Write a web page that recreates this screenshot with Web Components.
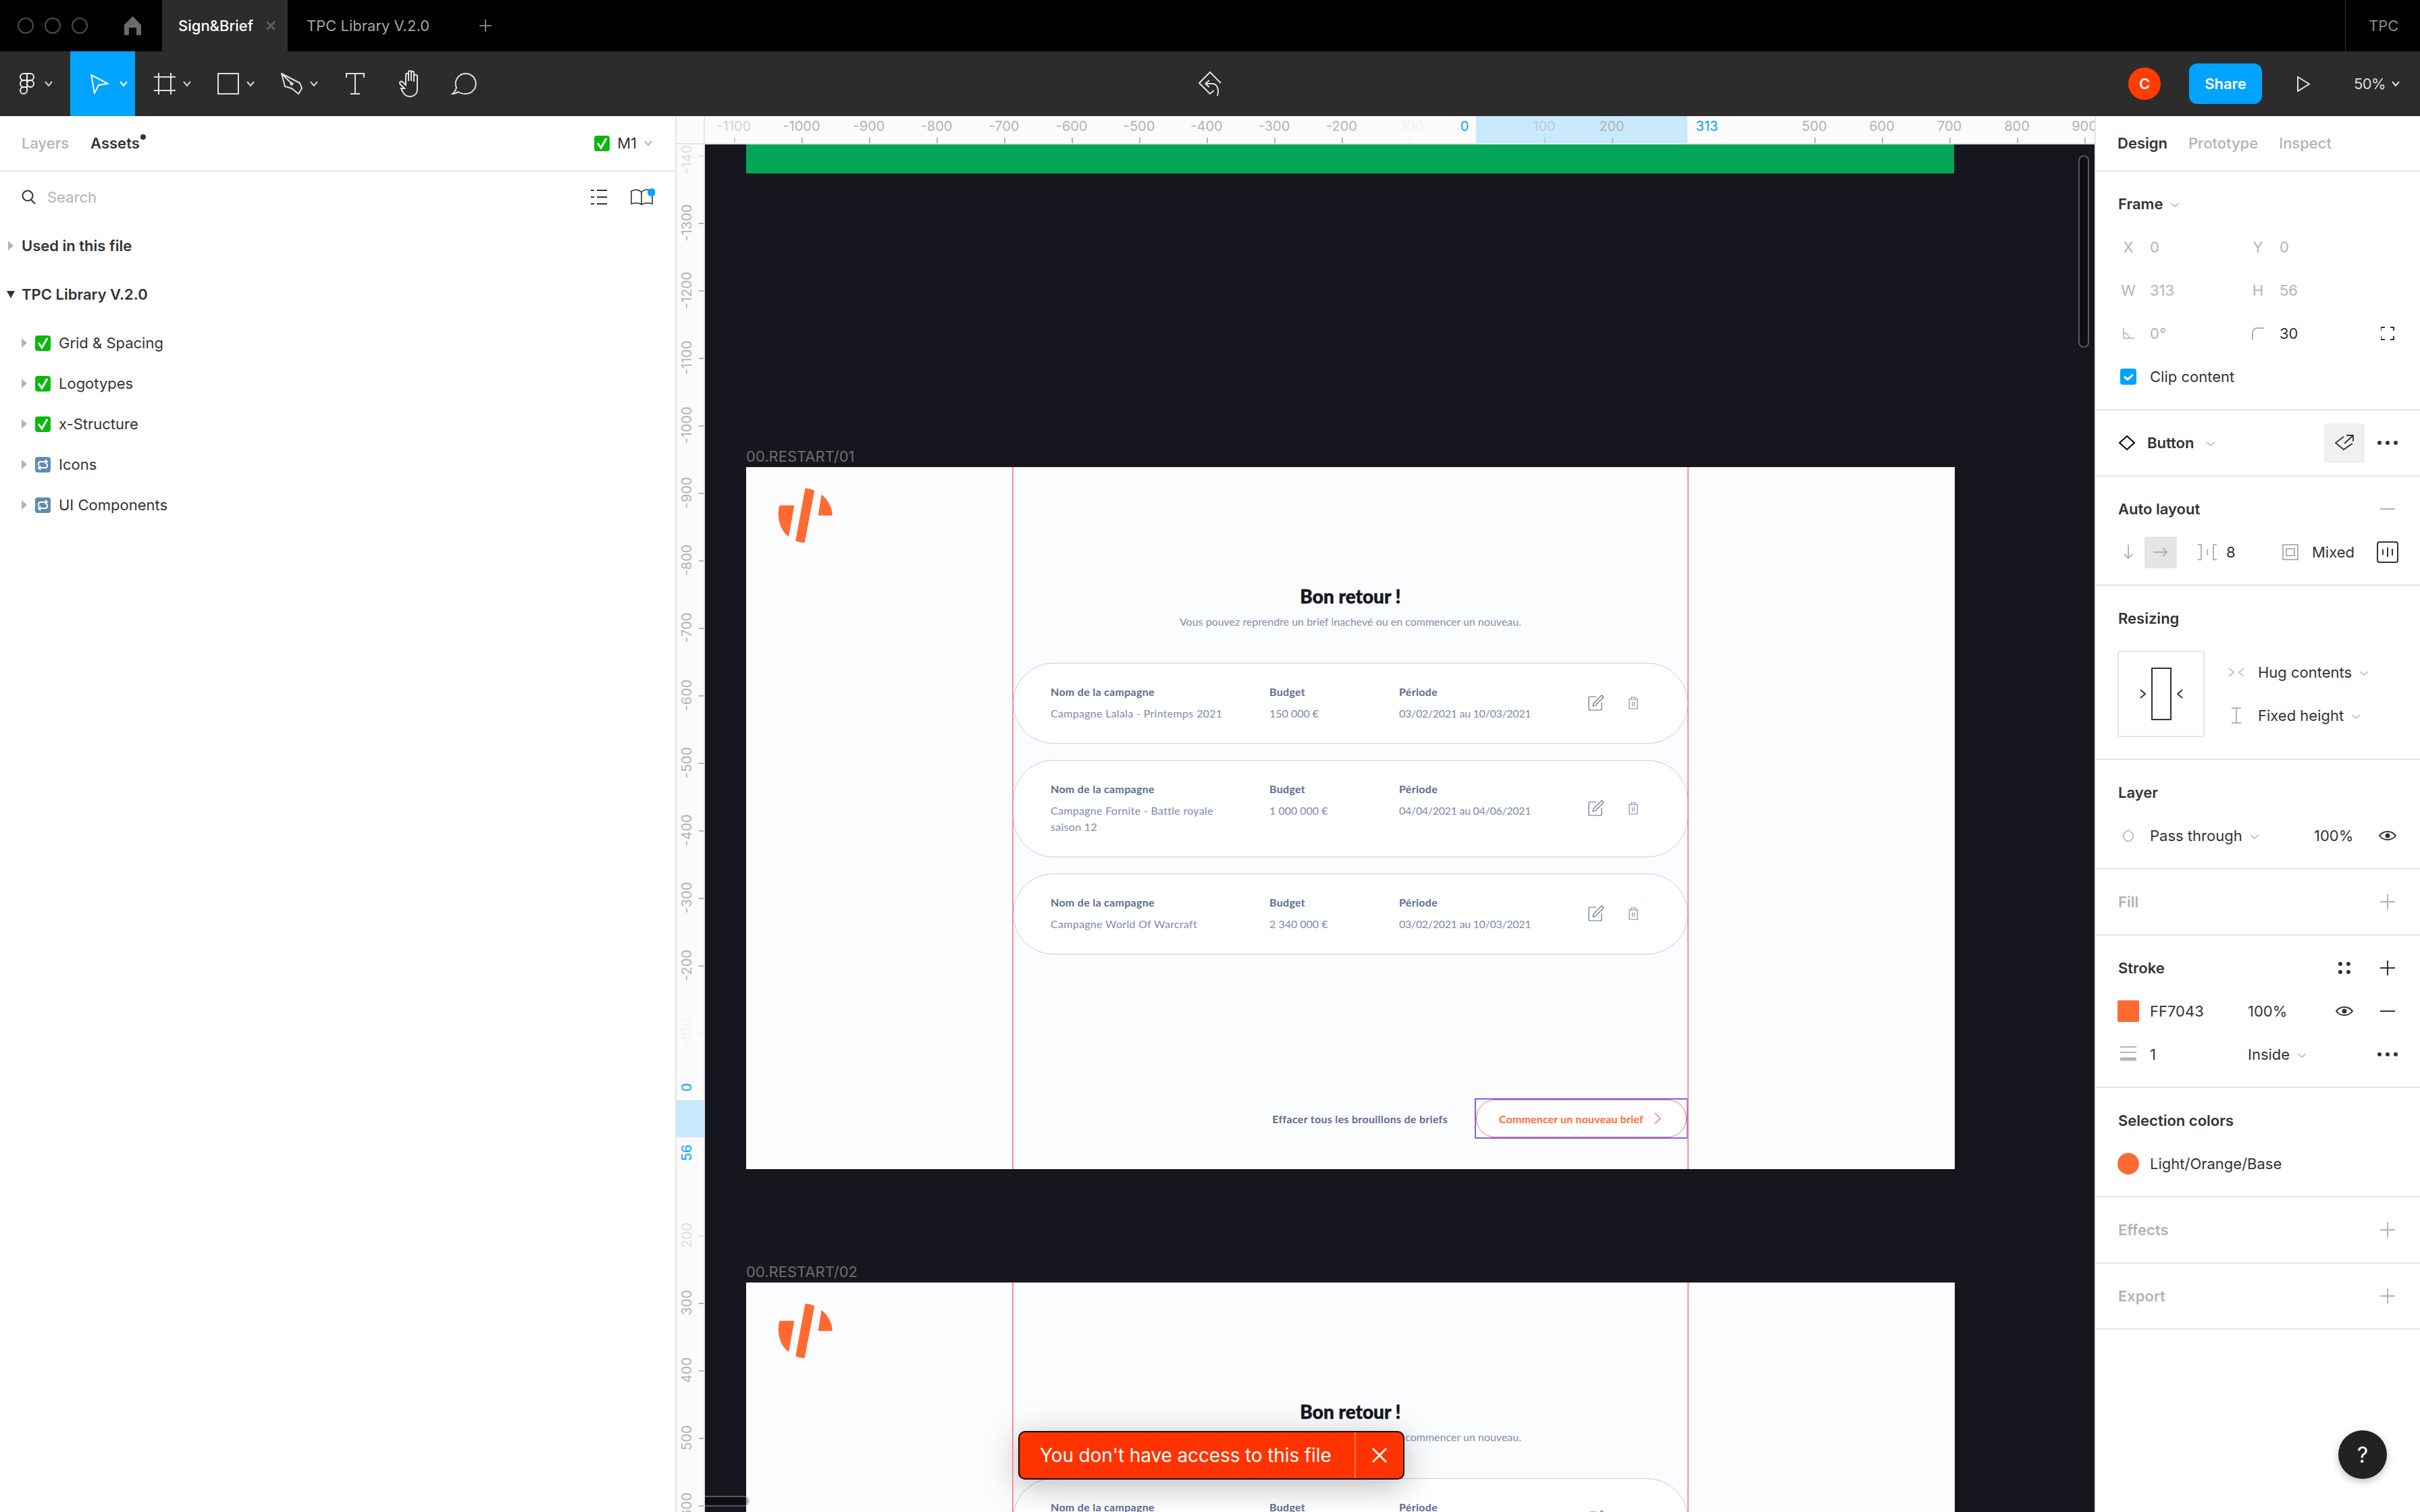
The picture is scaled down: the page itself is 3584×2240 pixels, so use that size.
<!DOCTYPE html>
<html lang="en">
<head>
<meta charset="utf-8">
<title>Sign&amp;Brief</title>
<style>
    html, body { margin: 0; padding: 0; background: #000; overflow: hidden; }
</style>
</head>
<body>
<fg-app></fg-app>
<script>
// shared svg icons, sized in real pixels
const svg = (w, h, body) =>
    `<svg width="${w}" height="${h}" viewBox="0 0 ${w} ${h}" fill="none" stroke="currentColor" stroke-width="2" style="display:block;flex:none">${body}</svg>`;

const dot = (x, y, r) => `<circle cx="${x}" cy="${y}" r="${r}" fill="currentColor" stroke="none"/>`;

const icons = {
    chevron: svg(12, 8, `<path d="M1 1l5 6 5-6"/>`),
    chevronWide: svg(14, 8, `<path d="M1 1l6 5 6-5" stroke-width="1.5"/>`),
    home: svg(25, 28, `<path d="M12.5 0L25 13v15h-7V17H7v11H0V13z" fill="currentColor" stroke="none"/>`),
    close: svg(16, 14, `<path d="M2 1l12 12M14 1L2 13" stroke-width="3"/>`),
    plus: svg(18, 18, `<path d="M9 0v18M0 9h18"/>`),
    figma: svg(22, 32, `<path d="M11 1H6a5 5 0 0 0 0 10h5zM11 1h5a5 5 0 0 1 0 10h-5zM11 11H6a5 5 0 0 0 0 10h5z"/><circle cx="16" cy="16" r="5"/><path d="M6 21h5v5a5 5 0 1 1-5-5z"/>`),
    move: svg(27, 29, `<path d="M1 1l25 13-14 2-6 12z"/>`),
    frame: svg(32, 32, `<path d="M7 0v32M25 0v32M0 6h32M0 26h32"/>`),
    rect: svg(32, 32, `<rect x="1" y="1" width="30" height="30"/>`),
    pen: svg(32, 32, `<path d="M1 1l27 14 3 8-5 8-10-8-10-3zM1 1l14 14"/>${dot(16, 16, 2.5)}`),
    text: svg(28, 32, `<path d="M1 7V1h26v6M14 1v30M7 31h14"/>`),
    hand: svg(36, 40, `<path d="M9 27L3 21c-3-3 1-6 4-3l4 4V7c0-3 4-3 4 0v9V3c0-3 4-3 4 0v13V4c0-3 4-3 4 0v13V9c0-3 5-3 5 0v19c0 7-5 11-11 11-7 0-10-5-13-12z"/>`),
    comment: svg(38, 32, `<path d="M2 31c4-3 5-6 6-9A15 15 0 1 1 22 31c-5 0-9-1-12-3-2 2-5 3-8 3z"/>`),
    component: svg(34, 37, `<path d="M23 28l-6 5L1 17 17 1l16 16M10 18l6-5M10 18l6 5M10 18h10c7 0 11 7 8 18"/>`),
    play: svg(20, 23, `<path d="M1 1l17 10.500L1 22z"/>`),
    search: svg(22, 22, `<circle cx="9" cy="9" r="7.500"/><path d="M14 15l6 6"/>`),
    list: svg(24, 24, `<path d="M0 2h5M9 2h15M0 12h5M9 12h15M0 22h5M9 22h15"/>`),
    book: svg(36, 26, `<path d="M1 4c6-3 12-2 15 2 3-4 9-5 16-2v19c-6-2-12-1-16 1-3-2-9-3-15-1zM16 6v18" stroke-width="1.600"/><circle cx="31" cy="6" r="6" fill="#00a3ff" stroke="none"/>`),
    caretRight: svg(8, 14, `<path d="M0 0l8 7-8 7z" fill="currentColor" stroke="none"/>`),
    caretDown: svg(12, 11, `<path d="M0 0h12L6 11z" fill="currentColor" stroke="none"/>`),
    check: svg(23, 23, `<rect width="23" height="23" rx="4" fill="#0cb80c" stroke="none"/><path d="M5 11l5 7 8-14" stroke="#fff" stroke-width="3"/>`),
    repeat: svg(23, 23, `<rect width="23" height="23" rx="4" fill="#5f8cae" stroke="none"/><path d="M5 13V10c0-2 1-3 3-3h10M15 4l3 3-3 3M18 10v3c0 2-1 3-3 3H5M8 13l-3 3 3 3" stroke="#fff" stroke-width="2"/>`),
    rotate: svg(18, 16, `<path d="M2 0v15h16M2 7c4 0 7 3 8 8" stroke-width="1.500"/>`),
    corner: svg(18, 18, `<path d="M1 18V9c0-5 3-8 8-8h9"/>`),
    full: svg(20, 20, `<path d="M0 6V1h6M14 1h5v5M0 14v5h6M14 19h5v-5"/>`),
    tick: svg(24, 24, `<rect width="24" height="24" rx="4" fill="#00a3ff" stroke="none"/><path d="M6 12l5 4 8-7" stroke="#fff" stroke-width="3"/>`),
    diamond: svg(26, 24, `<path d="M13 2l11 10-11 10L2 12z"/>`),
    detach: svg(30, 26, `<path d="M14 4L2 13l12 10 13-9M15 14L27 3M18 2h10v9" stroke-width="1.800"/>`),
    dots: svg(30, 6, `${dot(3, 3, 3)}${dot(15, 3, 3)}${dot(27, 3, 3)}`),
    minus: svg(22, 2, `<path d="M0 1h22"/>`),
    plusThin: svg(22, 22, `<path d="M11 0v22M0 11h22"/>`),
    down: svg(14, 22, `<path d="M7 0v20M1 14l6 6 6-6"/>`),
    right: svg(22, 14, `<path d="M0 7h20M14 1l6 6-6 6"/>`),
    gap: svg(28, 24, `<path d="M0 1h5v22H0M28 1h-5v22h5M14 8v8"/>`),
    padding: svg(24, 24, `<rect x="1" y="1" width="22" height="22"/><rect x="6" y="7" width="12" height="10"/>`),
    bars: svg(32, 32, `<rect x="1" y="1" width="30" height="30" rx="3"/><path d="M9 12v8M16 9v14M23 11v10"/>`),
    hug: svg(24, 14, `<path d="M1 1l7 6-7 6M23 1l-7 6 7 6" stroke-width="1.500"/>`),
    ibeam: svg(16, 24, `<path d="M1 1h14M8 1v22M1 23h14"/>`),
    drop: svg(18, 18, `<path d="M9 1l7 5v6l-4 5H6l-4-5V6z" stroke-width="1.500"/>`),
    eye: svg(26, 14, `<path d="M1 7c6-8 18-8 24 0-6 8-18 8-24 0z"/>${dot(13, 7, 3.5)}`),
    grid: svg(18, 18, `${dot(3, 3, 3)}${dot(15, 3, 3)}${dot(3, 15, 3)}${dot(15, 15, 3)}`),
    weight: svg(24, 24, `<path d="M0 1h24M0 9h24" stroke-width="2"/><path d="M0 19h24" stroke-width="5"/>`),
    edit: svg(24, 24, `<path d="M12 3H3a2 2 0 0 0-2 2v16a2 2 0 0 0 2 2h15a2 2 0 0 0 2-2V12" stroke-width="1.200"/><path d="M20 1l3 3-12 12-4 1 1-4z" stroke-width="1.200"/>`),
    trash: svg(16, 19, `<path d="M1 4h14M5 4V1h6v3M2 4v14h12V4M6.500 8v6M9.500 8v6" stroke-width="1.200"/>`),
    arrow: svg(10, 18, `<path d="M1 1l8 8-8 8" stroke-width="1.200"/>`),
    x: svg(22, 22, `<path d="M1 1l20 20M21 1L1 21" stroke-width="2.500"/>`),
    logo: `<svg width="82" height="82" viewBox="1152 723 82 82" style="display:block" fill="#ff6a33"><path d="M1154.600 748.700H1176.400L1168 795.300C1155 785 1149.500 766 1154.600 748.700Z"/><path d="M1192.500 723.300Q1200 723.800 1206.300 726.700L1191.600 804Q1184 803.700 1178.200 801.300Z"/><path d="M1216.600 732.700C1226.500 740.500 1232.500 752 1232.700 763.700H1211.700Z"/></svg>`
};

// small helper so every class stays short
class Base extends HTMLElement {
    constructor() {
        super();
        this.shadowDOM = this.attachShadow({mode: "open"});
    }
    connectedCallback() {
        this.render();
    }
}

class FgApp extends Base {
    render() {
        this.shadowDOM.innerHTML = `
            <style>
                :host {
                    display: grid;
                    grid-template-rows: 76px 96px 1fr;
                    width: 3584px;
                    height: 2240px;
                    position: relative;
                    overflow: hidden;
                    font-family: Inter, "Liberation Sans", sans-serif;
                    font-size: 22px;
                }
                .work {
                    display: grid;
                    grid-template-columns: 1002px 1fr 482px;
                    min-height: 0;
                }
            </style>
            <fg-titlebar></fg-titlebar>
            <fg-toolbar></fg-toolbar>
            <div class="work">
                <fg-assets></fg-assets>
                <fg-stage></fg-stage>
                <fg-design></fg-design>
            </div>
            <fg-toast>You don't have access to this file</fg-toast>
            <fg-help></fg-help>`;
    }
}

class FgTitlebar extends Base {
    render() {
        this.shadowDOM.innerHTML = `
            <style>
                :host {
                    display: flex;
                    align-items: center;
                    background: #000;
                    color: #a6a6a6;
                    height: 76px;
                }
                .lights { display: flex; gap: 16px; padding-left: 26px; }
                .lights i {
                    width: 24px; height: 24px; box-sizing: border-box;
                    border: 2px solid #4d4d4d; border-radius: 50%;
                }
                .home { color: #6b6b6b; margin: 0 31px 0 54px; }
                .tab {
                    display: flex; align-items: center;
                    height: 76px; box-sizing: border-box;
                    width: 186px; padding-left: 24px;
                    background: #2c2c2c; color: #fff; font-weight: 500;
                }
                .tab span:last-child { margin-left: 18px; color: #5c5c5c; }
                .other { margin-left: 28px; }
                .plus { margin-left: 74px; color: #808080; }
                .org {
                    margin-left: auto; width: 111px; height: 76px;
                    box-sizing: border-box; border-left: 1px solid #3a3a3a;
                    padding-left: 34px; display: flex; align-items: center;
                    color: #8c8c8c;
                }
            </style>
            <div class="lights"><i></i><i></i><i></i></div>
            <div class="home">${icons.home}</div>
            <div class="tab"><span>Sign&amp;Brief</span><span>${icons.close}</span></div>
            <div class="other">TPC Library V.2.0</div>
            <div class="plus">${icons.plus}</div>
            <div class="org">TPC</div>`;
    }
}

class FgToolbar extends Base {
    render() {
        const tool = (icon, more = true, cls = "") =>
            `<div class="tool ${cls}">${icon}${more ? `<span class="more">${icons.chevron}</span>` : ""}</div>`;
        this.shadowDOM.innerHTML = `
            <style>
                :host {
                    display: grid;
                    grid-template-columns: 1fr auto 1fr;
                    align-items: center;
                    background: #2c2c2c;
                    color: #e0e0e0;
                    height: 96px;
                }
                .tools, .end { display: flex; align-items: center; height: 96px; }
                .tool {
                    display: flex; align-items: center; height: 96px;
                    box-sizing: border-box; padding: 0 11px 0 28px; gap: 11px;
                }
                .more { color: #d0d0d0; }
                .logo { width: 104px; padding: 0 0 0 29px; gap: 15px; color: #eee; }
                .active { width: 96px; padding: 0 0 0 30px; gap: 16px; background: #00a3ff; color: #fff; }
                .active .more { color: #fff; }
                .t { width: 78px; padding-right: 0; margin-left: 2px; }
                .h { width: 78px; padding-right: 0; }
                .end { justify-content: flex-end; padding-right: 30px; }
                .avatar {
                    width: 48px; height: 48px; border-radius: 50%;
                    background: #ff3d00; color: #fff; font-weight: 600;
                    display: flex; align-items: center; justify-content: center;
                }
                .share {
                    width: 108px; height: 60px; border-radius: 12px;
                    background: #00a3ff; color: #fff; font-weight: 600;
                    display: flex; align-items: center; justify-content: center;
                    margin-left: 42px;
                }
                .play { margin-left: 52px; }
                .zoom {
                    margin-left: 64px; display: flex; align-items: center;
                    justify-content: space-between; width: 68px; color: #ddd;
                    letter-spacing: -.6px;
                }
            </style>
            <div class="tools">
                ${tool(icons.figma, true, "logo")}
                ${tool(icons.move, true, "active")}
                ${tool(icons.frame)}
                ${tool(icons.rect)}
                ${tool(icons.pen)}
                ${tool(icons.text, false, "t")}
                ${tool(icons.hand, false, "h")}
                ${tool(icons.comment, false)}
            </div>
            <div class="mid">${icons.component}</div>
            <div class="end">
                <div class="avatar">C</div>
                <div class="share">Share</div>
                <div class="play">${icons.play}</div>
                <div class="zoom"><span>50%</span>${icons.chevron}</div>
            </div>`;
    }
}

class FgAssets extends Base {
    render() {
        const row = (icon, name) => `
            <div class="lib"><span class="car">${icons.caretRight}</span>${icon}<span>${name}</span></div>`;
        this.shadowDOM.innerHTML = `
            <style>
                :host {
                    display: block;
                    background: #fff;
                    border-right: 2px solid #e5e5e5;
                    box-sizing: border-box;
                    color: #333;
                    overflow: hidden;
                }
                .head {
                    display: flex; align-items: center; height: 80px;
                    padding: 0 34px 0 32px; gap: 32px;
                    border-bottom: 2px solid #e5e5e5;
                }
                .off { color: #b3b3b3; font-weight: 500; }
                .on { font-weight: 600; position: relative; }
                .on::after {
                    content: ""; position: absolute; right: -9px; top: 0;
                    width: 8px; height: 8px; border-radius: 50%; background: #333;
                }
                .m1 { margin-left: auto; display: flex; align-items: center; gap: 11px; }
                .m1 .chev { color: #b3b3b3; margin-left: 0; }
                .search { display: flex; align-items: center; height: 76px; padding: 0 30px 0 32px; }
                .search .q { color: #b3b3b3; margin-left: 16px; }
                .search .list { margin-left: auto; color: #333; }
                .search .book { margin-left: 35px; color: #333; }
                .group { display: flex; align-items: center; font-weight: 600; position: relative; padding-left: 32px; }
                .used { height: 68px; }
                .tpc { height: 76px; margin-bottom: 4px; }
                .used .car { color: #b3b3b3; position: absolute; left: 12px; display: flex; }
                .tpc .car { color: #333; position: absolute; left: 10px; display: flex; }
                .lib { display: flex; align-items: center; height: 60px; padding-left: 32px; gap: 12px; }
                .lib .car { color: #b3b3b3; display: flex; }
            </style>
            <div class="head">
                <span class="off">Layers</span>
                <span class="on">Assets</span>
                <span class="m1">${icons.check}<span>M1</span><span class="chev">${icons.chevron}</span></span>
            </div>
            <div class="search">
                ${icons.search}<span class="q">Search</span>
                <span class="list">${icons.list}</span>
                <span class="book">${icons.book}</span>
            </div>
            <div class="group used"><span class="car">${icons.caretRight}</span>Used in this file</div>
            <div class="group tpc"><span class="car">${icons.caretDown}</span>TPC Library V.2.0</div>
            ${row(icons.check, "Grid &amp; Spacing")}
            ${row(icons.check, "Logotypes")}
            ${row(icons.check, "x-Structure")}
            ${row(icons.repeat, "Icons")}
            ${row(icons.repeat, "UI Components")}`;
    }
}

// ruler ticks sit at their canvas coordinate, that is the point of a ruler
class FgRuler extends Base {
    render() {
        const vertical = this.getAttribute("axis") === "y";
        const marks = JSON.parse(this.getAttribute("marks"));
        const bands = JSON.parse(this.getAttribute("bands"));
        const html = marks.map(([text, at, opacity, blue]) => {
            const label = `<span class="lbl ${blue ? "blue" : ""}" style="${vertical ? "top" : "left"}:${at}px;opacity:${opacity}">${text}</span>`;
            const tick = blue ? "" : `<i class="tick" style="${vertical ? "top" : "left"}:${at}px;opacity:${opacity}"></i>`;
            return label + tick;
        }).join("");
        const bandHtml = bands.map(([from, size]) =>
            `<b class="band" style="${vertical ? "top" : "left"}:${from}px;${vertical ? "height" : "width"}:${size}px"></b>`).join("");
        this.shadowDOM.innerHTML = `
            <style>
                :host {
                    display: block;
                    position: relative;
                    overflow: hidden;
                    background: #fbfbfb;
                    font-size: 20px;
                    color: #b3b3b3;
                    box-sizing: border-box;
                    ${vertical ? "border-right: 2px solid #e5e5e5;" : "border-bottom: 2px solid #e5e5e5;"}
                }
                .lbl { position: absolute; white-space: nowrap; line-height: 24px; }
                .blue { color: #00a3ff; }
                .tick { position: absolute; background: #b3b3b3; }
                .band { position: absolute; background: #c9e9fd; }
                ${vertical ? `
                .lbl { left: 15px; transform: translate(-50%, -50%) rotate(-90deg); }
                .tick { left: 33px; width: 7px; height: 2px; }
                .band { left: 0; right: 0; }
                ` : `
                .lbl { top: 3px; transform: translateX(-50%); }
                .tick { top: 32px; width: 2px; height: 8px; }
                .band { top: 0; bottom: 0; }
                `}
            </style>
            ${bandHtml}${html}`;
    }
}

class FgStage extends Base {
    render() {
        const xs = [];
        for (let v = -1100; v <= 900; v += 100) {
            if (v === 0 || v === 400 || v === 300) continue;
            let op = 1;
            if (v === -1100 || v === 100) op = 0.55;
            if (v === -100) op = 0.12;
            xs.push([v < 0 ? "-" + -v : "" + v, 2187 + v - 1044, op, false]);
        }
        xs.push(["0", 2169 - 1044, 1, true], ["313", 2528 - 1044, 1, true]);
        const ys = [];
        for (let v = -1400; v <= 600; v += 100) {
            if (v === 0 || v === 100) continue;
            let op = 1;
            if (v === -1400) op = 0.4;
            if (v === -100) op = 0.1;
            if (v === 200) op = 0.4;
            ys.push([v < 0 ? "-" + -v : "" + v, 1630 + v - 214, op, false]);
        }
        ys.push(["0", 1611 - 214, 1, true], ["56", 1708 - 214, 1, true]);
        this.shadowDOM.innerHTML = `
            <style>
                :host {
                    display: grid;
                    grid-template-columns: 42px 1fr;
                    grid-template-rows: 42px 1fr;
                    min-height: 0;
                    min-width: 0;
                    overflow: hidden;
                }
                .corner {
                    background: #fbfbfb;
                    border-right: 2px solid #e5e5e5;
                    border-bottom: 2px solid #e5e5e5;
                }
            </style>
            <div class="corner"></div>
            <fg-ruler axis="x" marks='${JSON.stringify(xs)}' bands='[[${2186 - 1044},313]]'></fg-ruler>
            <fg-ruler axis="y" marks='${JSON.stringify(ys)}' bands='[[${1630 - 214},55]]'></fg-ruler>
            <fg-canvas></fg-canvas>`;
    }
}

// free canvas: frames keep their place on it
class FgCanvas extends Base {
    render() {
        this.shadowDOM.innerHTML = `
            <style>
                :host {
                    display: block;
                    position: relative;
                    overflow: hidden;
                    background: #15161e;
                }
                .green { position: absolute; left: 61px; top: 0; width: 1789px; height: 43px; background: #02a759; }
                .vbar, .hbar {
                    position: absolute; box-sizing: border-box;
                    border: 2px solid rgba(255,255,255,.3); background: rgba(0,0,0,.3);
                }
                .vbar { left: 2034px; top: 16px; width: 16px; height: 285px; border-radius: 8px; }
                .hbar { left: -10px; top: 2002px; width: 76px; height: 16px; border-radius: 8px; }
            </style>
            <div class="green"></div>
            <tpc-frame name="00.RESTART/01" style="left:61px;top:478px" selected></tpc-frame>
            <tpc-frame name="00.RESTART/02" style="left:61px;top:1686px"></tpc-frame>
            <div class="vbar"></div>
            <div class="hbar"></div>`;
    }
}

class TpcFrame extends Base {
    render() {
        const sel = this.hasAttribute("selected");
        this.shadowDOM.innerHTML = `
            <style>
                :host {
                    display: grid;
                    grid-template-columns: 395px 1000px 395px;
                    position: absolute;
                    width: 1790px;
                    height: 1040px;
                    background: #fbfcfe;
                    color: #5c6b93;
                    font-family: Lato, "Liberation Sans", sans-serif;
                    font-size: 16px;
                }
                .name {
                    position: absolute; left: 0; top: -30px;
                    font-family: Inter, sans-serif; font-size: 22px; line-height: 28px;
                    color: #6e6e6e;
                }
                .brand { padding: 31px 0 0 47px; }
                main { position: relative; display: flex; flex-direction: column; }
                main::before, main::after {
                    content: ""; position: absolute; top: 0; bottom: 0;
                    width: 2px; background: #ff8e92; z-index: 1;
                }
                main::before { left: -1px; }
                main::after { right: -1px; }
                h1 {
                    margin: 173px 0 8px; text-align: center;
                    font-size: 28px; line-height: 36px; font-weight: 900; color: #15171f;
                    -webkit-text-stroke: .5px #15171f;
                }
                .sub { margin: 0 0 49px; text-align: center; line-height: 24px; color: #848fab; }
                .cards { display: flex; flex-direction: column; gap: 24px; }
                .foot {
                    margin-top: 213px; display: flex; align-items: center;
                    justify-content: flex-end; gap: 40px;
                }
                .wipe { font-weight: 700; letter-spacing: .3px; }
                .sel { border: 2px solid ${sel ? "#7b61ff" : "transparent"}; }
                .btn {
                    display: flex; align-items: center; gap: 16px;
                    width: 312px; height: 56px; box-sizing: border-box;
                    padding-left: 33px; border: 1px solid #ff7043; border-radius: 30px;
                    color: #ff6a33; font-weight: 700; background: #fff;
                    letter-spacing: .15px;
                }
            </style>
            <div class="name">${this.getAttribute("name")}</div>
            <div class="brand">${icons.logo}</div>
            <main>
                <h1>Bon retour !</h1>
                <p class="sub">Vous pouvez reprendre un brief inachevé ou en commencer un nouveau.</p>
                <div class="cards">
                    <campaign-card name="Campagne Lalala - Printemps 2021" budget="150 000 €" period="03/02/2021 au 10/03/2021"></campaign-card>
                    ${sel ? `
                    <campaign-card name="Campagne Fornite - Battle royale<br>saison 12" budget="1 000 000 €" period="04/04/2021 au 04/06/2021"></campaign-card>
                    <campaign-card name="Campagne World Of Warcraft" budget="2 340 000 €" period="03/02/2021 au 10/03/2021"></campaign-card>` : ""}
                </div>
                ${sel ? `
                <div class="foot">
                    <span class="wipe">Effacer tous les brouillons de briefs</span>
                    <div class="sel"><div class="btn"><span>Commencer un nouveau brief</span>${icons.arrow}</div></div>
                </div>` : ""}
            </main>
            <div></div>`;
    }
}

class CampaignCard extends Base {
    render() {
        this.shadowDOM.innerHTML = `
            <style>
                :host {
                    display: grid;
                    grid-template-columns: 324px 192px 280px 24px 16px;
                    align-items: center;
                    padding: 30px 0 32px 55px;
                    border: 1px solid #c2cde6;
                    border-radius: 60px;
                    background: #fff;
                    box-sizing: border-box;
                }
                .col { line-height: 24px; align-self: start; color: #808ba8; white-space: nowrap; }
                .col b { display: block; font-weight: 700; color: #5c6b93; margin-bottom: 8px; letter-spacing: .3px; }
                .name span { letter-spacing: .3px; }
                .period span { letter-spacing: -.3px; }
                .edit { color: #5c6b93; }
                .trash { color: #7f8cae; margin-left: 35px; }
            </style>
            <div class="col name"><b>Nom de la campagne</b><span>${this.getAttribute("name")}</span></div>
            <div class="col"><b>Budget</b><span>${this.getAttribute("budget")}</span></div>
            <div class="col period"><b>Période</b><span>${this.getAttribute("period")}</span></div>
            <div class="edit">${icons.edit}</div>
            <div class="trash">${icons.trash}</div>`;
    }
}

class FgSection extends Base {
    render() {
        this.shadowDOM.innerHTML = `
            <style>
                :host {
                    display: block;
                    padding: 16px 0;
                    border-bottom: 2px solid #e5e5e5;
                }
            </style>
            <slot></slot>`;
    }
}

class FgDesign extends Base {
    render() {
        const head = (title, rest = "", off = false) => `
            <div class="row head ${off ? "off" : ""}">
                <span class="ttl">${title}</span>${rest}
            </div>`;
        const cell = (icon, color = "") => `<span class="c" style="color:${color}">${icon}</span>`;
        this.shadowDOM.innerHTML = `
            <style>
                :host {
                    display: block;
                    background: #fff;
                    border-left: 2px solid #e5e5e5;
                    color: #333;
                    overflow: hidden;
                    position: relative;
                }
                .tabs {
                    display: flex; align-items: center; height: 80px; gap: 31px;
                    padding-left: 32px; border-bottom: 2px solid #e5e5e5;
                    color: #b3b3b3; font-weight: 500;
                }
                .tabs b { color: #333; font-weight: 600; }
                .row {
                    display: grid; align-items: center; height: 64px;
                    padding: 0 16px; box-sizing: border-box; white-space: nowrap;
                }
                .head { grid-template-columns: 1fr 64px 64px; padding-left: 33px; }
                .head.off, .head.off .ttl { color: #b3b3b3; }
                .ttl { font-weight: 600; grid-column: 1; }
                .ttl svg, .val svg { display: inline-block !important; vertical-align: middle; margin-left: 11px; color: #b3b3b3; }
                .c { display: flex; justify-content: center; }
                .pos { grid-template-columns: 64px 128px 64px 128px 64px; }
                .grey { color: #b3b3b3; }
                .comp { grid-template-columns: 60px 1fr 60px 64px; }
                .comp .ttl { grid-column: 2; }
                .comp .box {
                    width: 60px; height: 59px; border-radius: 4px; background: #f0f0f0;
                    display: flex; align-items: center; justify-content: center;
                    margin-left: -2px;
                }
                .auto { grid-template-columns: 56px 48px 73px 63px 64px 80px 64px; }
                .auto .a { padding-left: 8px; color: #b3b3b3; }
                .auto .on {
                    width: 48px; height: 47px; background: #e5e5e5; border-radius: 3px;
                    display: flex; align-items: center; justify-content: center; color: #b3b3b3;
                }
                .auto .g { display: flex; justify-content: flex-end; padding-right: 14px; color: #b3b3b3; }
                .resize { display: flex; padding-left: 32px; margin-top: 16px; }
                .pad {
                    width: 129px; height: 128px; box-sizing: border-box; flex: none;
                    border: 2px solid #e5e5e5; border-radius: 4px;
                    display: flex; align-items: center; justify-content: center; gap: 8px; color: #333;
                }
                .pad i { width: 30px; height: 78px; box-sizing: border-box; border: 2px solid #333; }
                .sizes { margin-left: 15px; }
                .sizes .row { grid-template-columns: 64px 1fr; padding: 0; }
                .layer { grid-template-columns: 64px 243px 77px 64px; }
                .stroke { grid-template-columns: 64px 145px 111px 64px 64px; }
                .swatch { width: 32px; height: 32px; border-radius: 2px; background: #ff6a33; }
                .round { border-radius: 50%; }
                .one { grid-template-columns: 64px 1fr; }
            </style>
            <div class="tabs"><b>Design</b><span>Prototype</span><span>Inspect</span></div>

            <fg-section>
                ${head(`Frame${icons.chevronWide}`)}
                <div class="row pos grey">${cell("X")}<span>0</span>${cell("Y")}<span>0</span></div>
                <div class="row pos grey">${cell("W")}<span>313</span>${cell("H")}<span>56</span></div>
                <div class="row pos grey">${cell(icons.rotate)}<span>0°</span>${cell(icons.corner)}<span style="color:#333">30</span>${cell(icons.full, "#333")}</div>
                <div class="row pos"><span class="c">${icons.tick}</span><span>Clip content</span></div>
            </fg-section>

            <fg-section>
                <div class="row comp">
                    ${cell(icons.diamond, "#000")}
                    <span class="ttl">Button<span style="margin-left:7px">${icons.chevronWide}</span></span>
                    <span class="box">${icons.detach}</span>
                    ${cell(icons.dots)}
                </div>
            </fg-section>

            <fg-section>
                ${head("Auto layout", `<span class="c grey" style="grid-column:3">${icons.minus}</span>`)}
                <div class="row auto">
                    <span class="c a">${icons.down}</span>
                    <span class="on">${icons.right}</span>
                    <span class="g">${icons.gap}</span>
                    <span>8</span>
                    ${cell(icons.padding, "#b3b3b3")}
                    <span>Mixed</span>
                    ${cell(icons.bars)}
                </div>
            </fg-section>

            <fg-section>
                ${head("Resizing")}
                <div class="resize">
                    <div class="pad">${svg(9, 14, `<path d="M1 1l7 6-7 6"/>`)}<i></i>${svg(9, 14, `<path d="M8 1L1 7l7 6"/>`)}</div>
                    <div class="sizes">
                        <div class="row">${cell(icons.hug, "#b3b3b3")}<span class="val">Hug contents${icons.chevronWide}</span></div>
                        <div class="row">${cell(icons.ibeam, "#b3b3b3")}<span class="val">Fixed height${icons.chevronWide}</span></div>
                    </div>
                </div>
                <div style="height:16px"></div>
            </fg-section>

            <fg-section>
                ${head("Layer")}
                <div class="row layer">
                    ${cell(icons.drop, "#b3b3b3")}
                    <span class="val">Pass through${icons.chevronWide}</span>
                    <span>100%</span>
                    ${cell(icons.eye)}
                </div>
            </fg-section>

            <fg-section>
                ${head("Fill", `<span class="c grey" style="grid-column:3">${icons.plusThin}</span>`, true)}
            </fg-section>

            <fg-section>
                ${head("Stroke", `<span class="c" style="grid-column:2">${icons.grid}</span><span class="c" style="grid-column:3">${icons.plusThin}</span>`)}
                <div class="row stroke">
                    <span class="c"><span class="swatch"></span></span>
                    <span>FF7043</span>
                    <span>100%</span>
                    ${cell(icons.eye)}
                    ${cell(icons.minus)}
                </div>
                <div class="row stroke">
                    ${cell(icons.weight, "#b3b3b3")}
                    <span>1</span>
                    <span class="val">Inside${icons.chevronWide}</span>
                    <span></span>
                    ${cell(icons.dots)}
                </div>
            </fg-section>

            <fg-section>
                ${head("Selection colors")}
                <div class="row one">
                    <span class="c"><span class="swatch round"></span></span>
                    <span>Light/Orange/Base</span>
                </div>
            </fg-section>

            <fg-section>
                ${head("Effects", `<span class="c grey" style="grid-column:3">${icons.plusThin}</span>`, true)}
            </fg-section>

            <fg-section>
                ${head("Export", `<span class="c grey" style="grid-column:3">${icons.plusThin}</span>`, true)}
            </fg-section>`;
    }
}

class FgToast extends Base {
    render() {
        this.shadowDOM.innerHTML = `
            <style>
                :host {
                    position: absolute;
                    left: 1508px;
                    bottom: 48px;
                    display: flex;
                    align-items: center;
                    height: 72px;
                    box-sizing: border-box;
                    background: #ff3300;
                    color: #fff;
                    border: 2px solid #1a0a05;
                    border-radius: 10px;
                    font-size: 28px;
                    letter-spacing: -.12px;
                    box-shadow: 0 10px 48px rgba(0, 0, 0, .28);
                }
                .msg { padding: 0 34px 0 30px; white-space: nowrap; }
                .x {
                    width: 70px; height: 68px; display: flex;
                    align-items: center; justify-content: center;
                    border-left: 2px solid #ff7a5c;
                }
            </style>
            <div class="msg"><slot></slot></div>
            <div class="x">${icons.x}</div>`;
    }
}

class FgHelp extends Base {
    render() {
        this.shadowDOM.innerHTML = `
            <style>
                :host {
                    position: absolute;
                    right: 49px;
                    bottom: 49px;
                    width: 72px;
                    height: 72px;
                    border-radius: 50%;
                    background: #222;
                    color: #fff;
                    font-size: 32px;
                    display: flex;
                    align-items: center;
                    justify-content: center;
                    box-shadow: 0 4px 12px rgba(0, 0, 0, .25);
                }
            </style>
            ?`;
    }
}

customElements.define("fg-titlebar", FgTitlebar);
customElements.define("fg-toolbar", FgToolbar);
customElements.define("fg-assets", FgAssets);
customElements.define("fg-ruler", FgRuler);
customElements.define("fg-canvas", FgCanvas);
customElements.define("fg-stage", FgStage);
customElements.define("tpc-frame", TpcFrame);
customElements.define("campaign-card", CampaignCard);
customElements.define("fg-section", FgSection);
customElements.define("fg-design", FgDesign);
customElements.define("fg-toast", FgToast);
customElements.define("fg-help", FgHelp);
customElements.define("fg-app", FgApp);
</script>
</body>
</html>
